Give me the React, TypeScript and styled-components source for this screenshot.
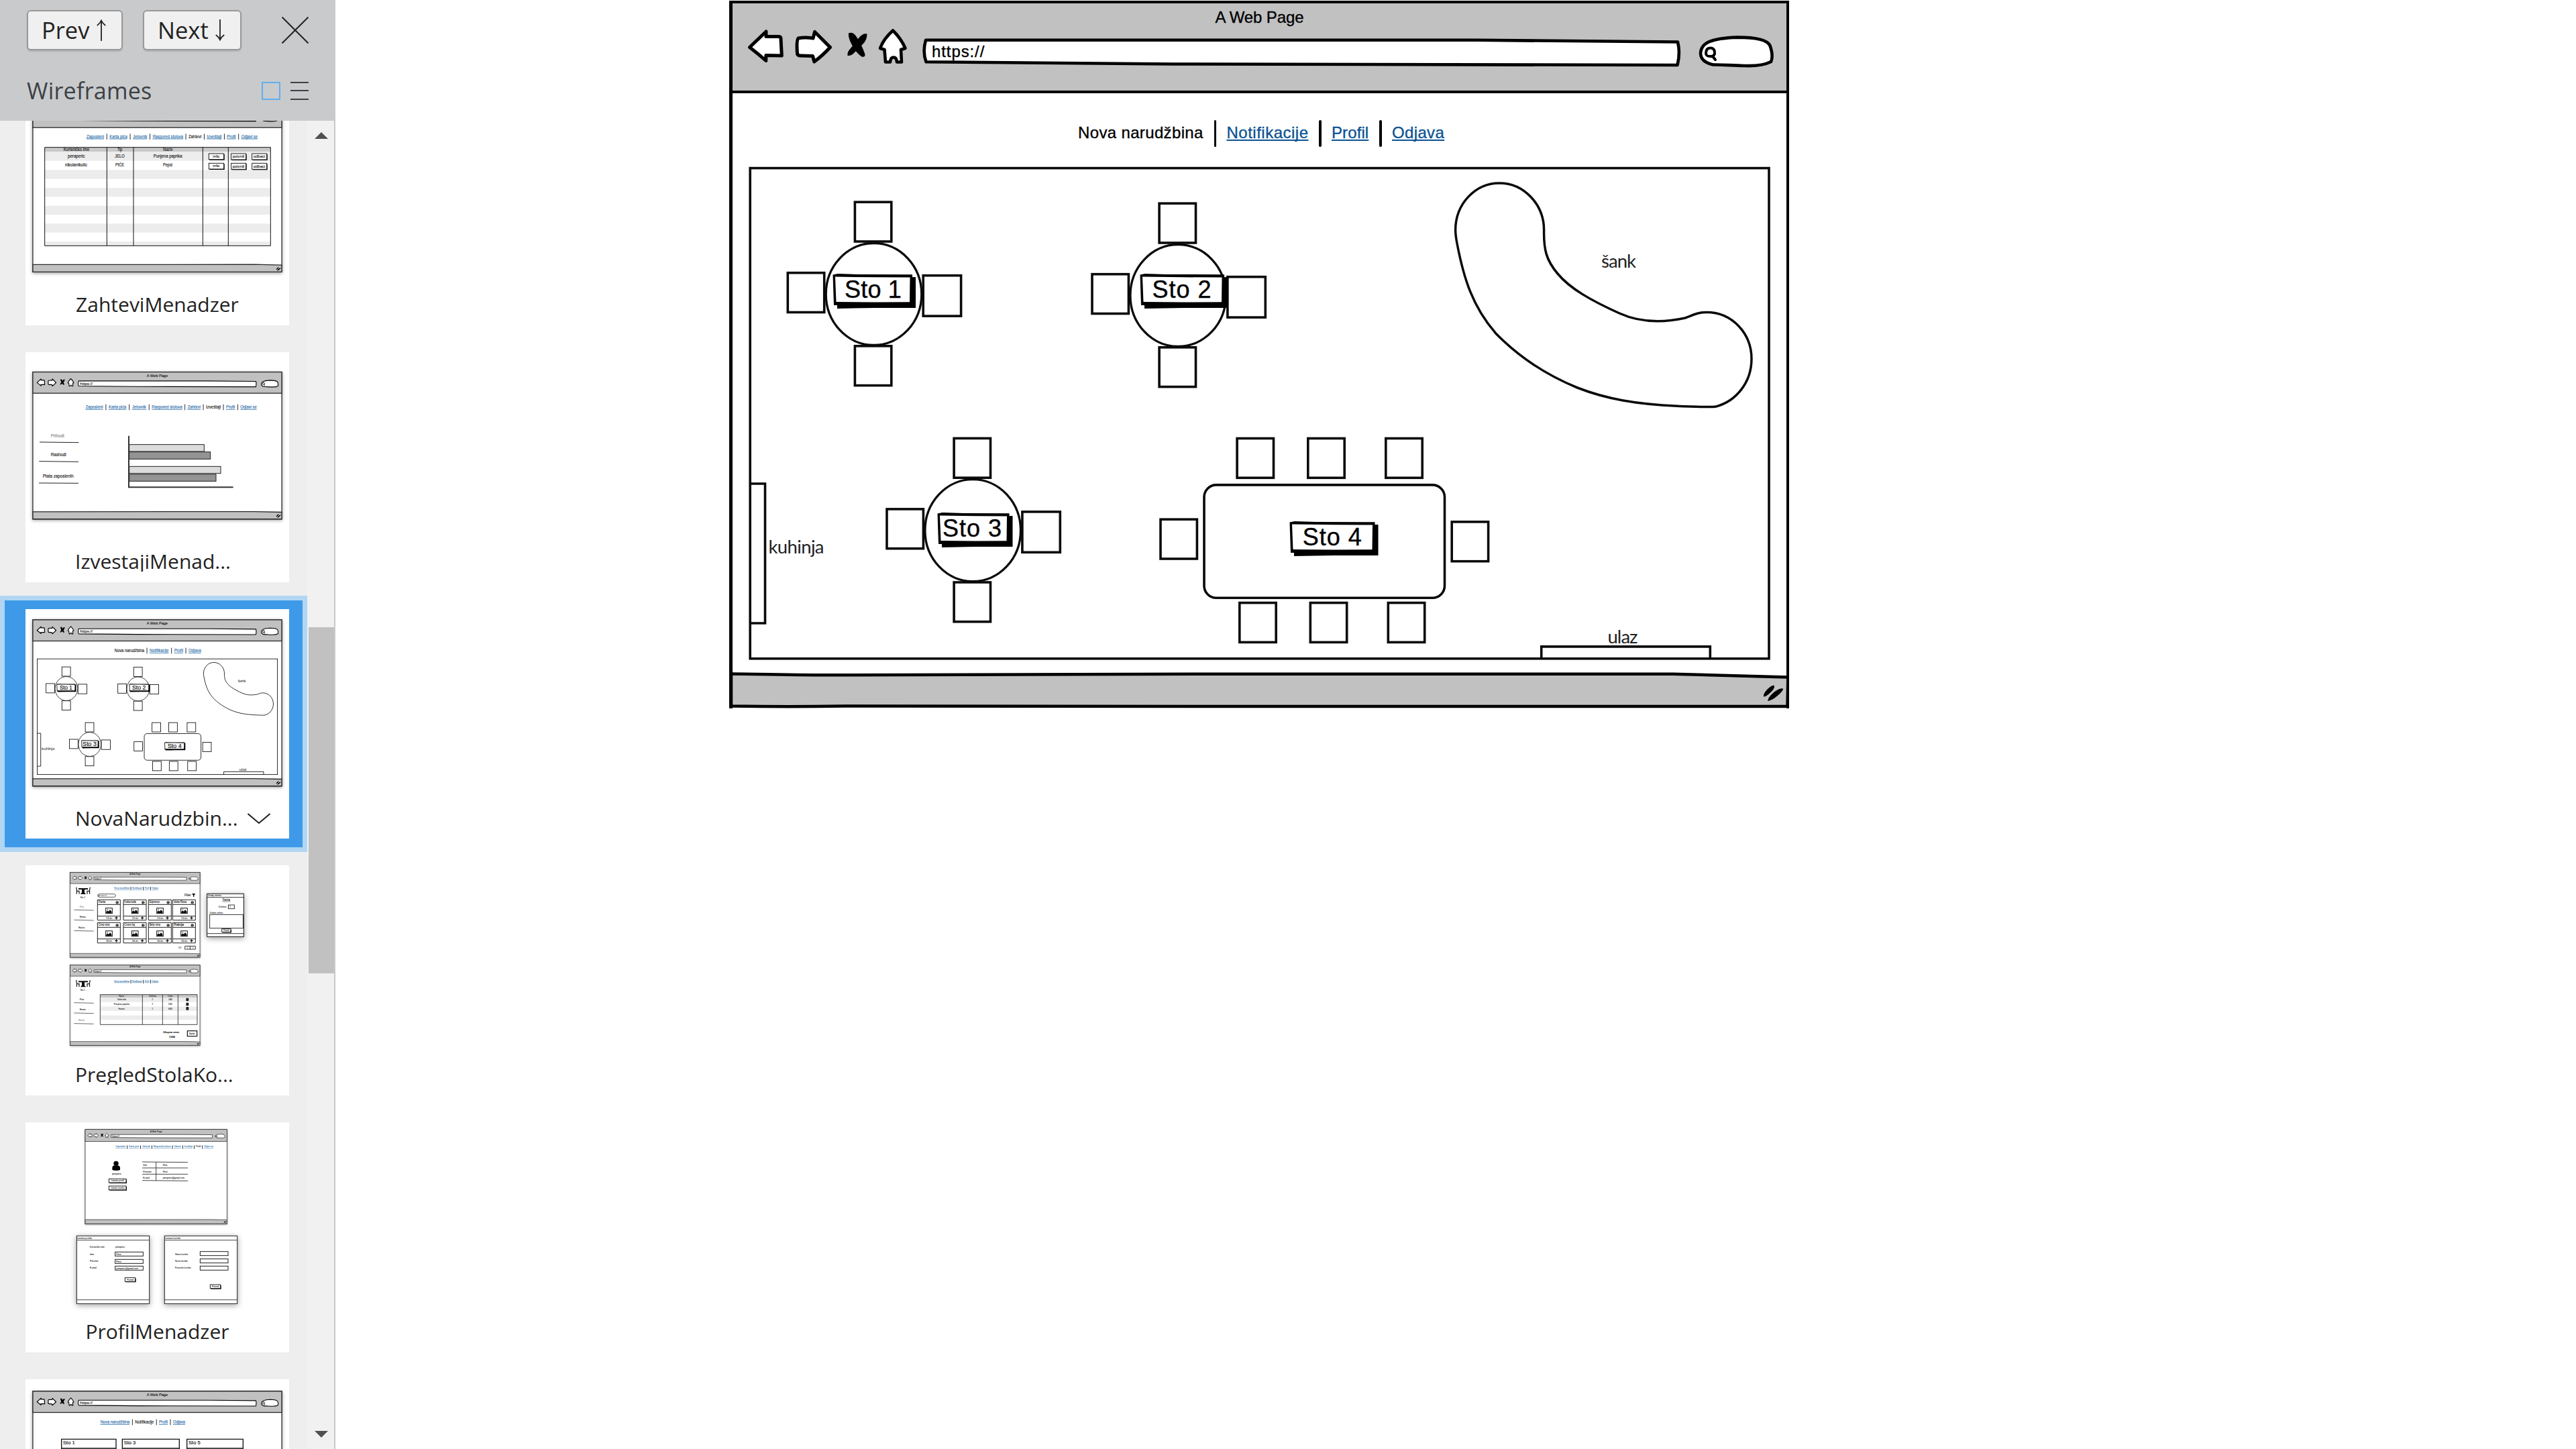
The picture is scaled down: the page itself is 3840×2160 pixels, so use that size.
import React from 'react';
import styled, { createGlobalStyle, css } from 'styled-components';

const uiFont = '"Open Sans", "Noto Sans", sans-serif';
const sketchFont = '"Liberation Sans", Arial, sans-serif';

const Global = createGlobalStyle`
  *, *::before, *::after { box-sizing: border-box; }
  html, body { margin: 0; padding: 0; background: #fff; }
  svg { display: block; }
`;

/* ---------- shared sketch artwork (wireframe canvas units) ---------- */

const INK = '#000';
const CHROME = '#c1c1c1';
const LINK = '#0b5394';

const BackArt = () => (
  <path d="M1117.5 70.5 L1142 47 L1142 54.5 L1161 54.5 Q1164 54.5 1164 58 L1165.3 83 L1141.8 82.5 L1141.8 90.5 Q1130 80 1117.5 70.5Z"
    fill="#fff" stroke={INK} strokeWidth={5} strokeLinejoin="round" />
);
const ForwardArt = () => (
  <path d="M1237.5 70.5 L1214.5 47.5 L1212 57 Q1200 55 1190 57 Q1187 60 1188.5 80 Q1189 83 1194 83 L1211.5 83.5 L1213.8 92 Q1226 83 1237.5 70.5Z"
    fill="#fff" stroke={INK} strokeWidth={5} strokeLinejoin="round" />
);
const StopArt = () => (
  <g fill={INK}>
    <path d="M1265 49.5 Q1271 47 1275.5 53 Q1284 65 1289.5 81 Q1290 85.5 1284.5 84.5 Q1276 79 1270 67 Q1264 56 1265 49.5Z" />
    <path d="M1292.5 50.5 Q1287 49 1281.5 55 L1268 72 Q1263 77 1263.3 82.5 Q1268 84.5 1273 79 L1286 66 Q1292.5 60 1292.5 50.5Z" />
  </g>
);
const HomeArt = () => (
  <path d="M1331 45.5 Q1343 57 1349.5 72 L1343 74 L1344 92.5 L1337 92.5 Q1336.5 85.5 1332 85.5 Q1327.5 85.5 1327 92.5 L1320 92.5 L1318.5 74 L1312 72 Q1317 58 1331 45.5Z"
    fill="#fff" stroke={INK} strokeWidth={4.6} strokeLinejoin="round" />
);
const AddressArt = () => (
  <path d="M1380 59.8 L2200 59.8 L2501 62.5 Q2505 79 2500.5 97 L1750 95.5 L1380.5 92.3 Q1375 77 1380 59.8Z"
    fill="#fff" stroke={INK} strokeWidth={4.6} strokeLinejoin="round" />
);
const SearchArt = () => (
  <g stroke={INK} strokeLinejoin="round" strokeLinecap="round">
    <path d="M2535 79 C2536 64 2550 57 2590 55.6 C2620 55.6 2635 60 2638.5 68 C2642 78 2643 85 2640 92 C2628 98 2612 98.5 2600 98 C2580 97.5 2564 96 2554 96.5 C2542 94 2535 88 2535 79Z"
      fill="#fff" strokeWidth={4.6} />
    <path d="M2549.5 71.5 C2544 71.5 2543 76 2543 79.5 C2543 83.5 2546 84 2550 84 C2555 84 2556.5 81 2556 77.5 C2555.5 73 2553 71.5 2549.5 71.5 M2553 84 L2557 89" fill="none" strokeWidth={4} />
  </g>
);
const GripArt = () => (
  <g fill={INK}>
    <path d="M2629 1038.5 Q2628 1034 2635 1027 Q2643 1020 2645 1022.5 Q2645.5 1027 2639 1032.5 Q2633 1038.5 2629 1038.5Z" />
    <path d="M2635.5 1045 Q2634.5 1041 2642 1034 Q2652 1025 2658 1026.5 Q2658.5 1029.5 2651 1036 Q2642 1044 2635.5 1045Z" />
  </g>
);

const round = [
  { dx: 0, dy: 0 },
  { dx: 453.7, dy: 2 },
  { dx: 147.7, dy: 352.2 },
];
const longTableChairs = [
  [1842.3, 651.7], [1948, 651.7], [2064, 651.7],
  [1728.2, 772.4], [2162.4, 776.1],
  [1846, 896.8], [1951.5, 896.8], [2067.5, 896.8],
];

const Chair = ({ x, y, w = 58, h = 62.4 }: { x: number; y: number; w?: number; h?: number }) => (
  <rect x={x + 1.8} y={y + 1.8} width={w - 3.6} height={h - 3.6} />
);

const PlanArt = () => (
  <>
    <g fill="#fff" stroke="#0a0a0a" strokeWidth={3.6}>
      <rect x={1118.2} y={250.6} width={1518.8} height={731.2} />
      <path d="M1118 721 H1140.5 V929 H1118 M2297.7 981.8 V963.9 H2549.3 V981.8" fill="none" />
      {round.map(({ dx, dy }) => (
        <g key={dx} transform={`translate(${dx} ${dy})`}>
          <Chair x={1272.6} y={299.4} />
          <Chair x={1172.5} y={404.9} />
          <Chair x={1374.4} y={408.9} w={60} h={64} />
          <Chair x={1272.6} y={514} />
          <ellipse cx={1302.5} cy={438.5} rx={71.3} ry={76} strokeWidth={3.3} />
        </g>
      ))}
      <rect x={1795} y={722.9} width={358.5} height={168.3} rx={18} />
      {longTableChairs.map(([x, y]) => <Chair key={`${x}-${y}`} x={x} y={y} />)}
      <path strokeWidth={3.5} d="M2169.6 343 C2169.6 304 2199 272.9 2235 272.9 C2272 272.9 2301.6 305 2301.6 343 C2301 372 2305 388 2322 408 C2340 430 2372 448 2414 467 C2445 481 2480 481 2512 474 C2523 470 2530 465.5 2544 465.5 C2582 465.5 2611 497 2611 535 C2611 570 2588 598 2558 606 C2550 607.5 2520 606 2500 605.3 C2440 602.5 2395 595 2351.5 578 C2300 557 2262 530 2229.5 496.7 C2195 457 2182 415 2172 363 C2170.5 355 2169.6 350 2169.6 343Z" />
    </g>
    <g fill="#222" fontFamily="Lato, 'Open Sans', sans-serif" fontSize={27.5}>
      <text x={2387} y={399.3} textLength={52}>šank</text>
      <text x={1145.5} y={825} textLength={83}>kuhinja</text>
      <text x={2396.5} y={959.3} textLength={45}>ulaz</text>
    </g>
  </>
);

type TableTag = { name: string; x: number; y: number; w: number; tx: number; tw: number };
const tables: TableTag[] = [
  { name: 'Sto 1', x: 1240.5, y: 408, w: 124, tx: 19.5, tw: 80 },
  { name: 'Sto 2', x: 1699, y: 408, w: 131, tx: 19.5, tw: 86.5 },
  { name: 'Sto 3', x: 1397, y: 764, w: 112.5, tx: 9, tw: 87 },
  { name: 'Sto 4', x: 1922.3, y: 777, w: 132.5, tx: 20.5, tw: 88 },
];

const TagArt = ({ w }: { w: number }) => (
  <>
    <path d={`M7 10 L${w} 5 L${w} 51 L${w / 2} 51 L7 52Z`} fill={INK} />
    <path d={`M0.5 1.5 L8 0 L40 1 L${w - 5} 1.2 L${w - 4} 46 L2 47Z`} fill={INK} />
    <path d={`M4 4.6 L${w / 2} 5.3 L${w - 8.5} 5.6 L${w - 9} 42.2 L${w / 2} 42.6 L5.5 42Z`} fill="#fff" />
  </>
);

/* ---------- thumbnail drawings ---------- */

type LabelProps = {
  x: number; y: number; to?: number; size?: number; fill?: string;
  link?: boolean; bold?: boolean; children: string;
};
const Label = ({ x, y, to, size = 20, fill = '#111', link, bold, children }: LabelProps) => {
  const color = link ? '#1f6aa8' : fill;
  return (
    <text x={x} y={y} fontFamily={sketchFont} fontSize={size} fontWeight={bold ? 700 : 400}
      fill={color} stroke={color} strokeWidth={size * 0.02} textDecoration={link ? 'underline' : undefined}
      textLength={to ? to - x : undefined} lengthAdjust="spacingAndGlyphs">{children}</text>
  );
};

const shadow = { filter: 'drop-shadow(0 6px 12px rgba(0,0,0,.38))' };

type MiniBrowserProps = { x: number; y: number; w: number; h: number; untitled?: boolean; children?: React.ReactNode };
const MiniBrowser = ({ x, y, w, h, untitled, children }: MiniBrowserProps) => {
  const s = w / 1579;
  const full = h / s;
  const drop = full - 1054;
  return (
    <g transform={`translate(${x} ${y}) scale(${s}) translate(-1088 -1)`}>
      <rect x={1090.5} y={3.5} width={1574} height={full - 5} fill="#fff" stroke="#2a2a2a" strokeWidth={5.5} style={shadow} />
      <rect x={1090.5} y={3.5} width={1574} height={134} fill={CHROME} stroke="#2a2a2a" strokeWidth={5.5} />
      <g transform={`translate(0 ${drop})`}>
        <path d="M1090.5 1006 L2494 1005 L2664.5 1009 V1052.5 H1090.5Z" fill={CHROME} stroke="#2a2a2a" strokeWidth={5.5} />
        <GripArt />
      </g>
      <BackArt /><ForwardArt /><StopArt /><HomeArt /><AddressArt /><SearchArt />
      {!untitled && (
        <>
          <Label x={1811} y={34} to={1944} size={24}>A Web Page</Label>
          <Label x={1389} y={85} to={1468} size={24}>https://</Label>
        </>
      )}
      {children}
    </g>
  );
};

type NavItem = [string, number, number];
const MiniNav = ({ items, active, y, size = 20, bar = 26 }: { items: NavItem[]; active?: string; y: number; size?: number; bar?: number }) => (
  <>
    {items.map(([name, from, to], i) => (
      <React.Fragment key={name}>
        <Label x={from} to={to} y={y} size={size} link={name !== active}>{name}</Label>
        {i < items.length - 1 && (
          <rect x={(to + items[i + 1][1]) / 2 - 1.2} y={y + 7 - bar} width={2.6} height={bar} fill="#111" />
        )}
      </React.Fragment>
    ))}
  </>
);

const managerNav: NavItem[] = [
  ['Zaposleni', 383, 461], ['Karta pića', 486, 565], ['Jelovnik', 591, 654],
  ['Raspored stolova', 679, 815], ['Zahtevi', 839, 897], ['Izveštaji', 921, 987],
  ['Profil', 1011, 1051], ['Odjavi se', 1075, 1148],
];

const MiniButton = ({ x, y, w, h, from, to, size = 14, children }: { x: number; y: number; w: number; h: number; from: number; to: number; size?: number; children: string }) => (
  <>
    <path d={`M${x + 3} ${y + 3} h${w} v${h} h${-w}z`} fill="#000" />
    <rect x={x} y={y} width={w} height={h} fill="#fff" stroke="#111" strokeWidth={2.8} />
    <Label x={from} to={to} y={y + h * 0.7} size={size}>{children}</Label>
  </>
);

const RequestsDrawing = () => (
  <>
    <MiniBrowser x={145} y={474} w={1117} h={744} untitled />
    <g transform="translate(4 0)"><MiniNav items={managerNav} active="Zahtevi" y={617} /></g>
    <rect x={200} y={659} width={1010} height={20} fill="#c9c9c9" />
    {[679, 760, 840, 920, 1000, 1080].map((y) => (
      <rect key={y} x={200} y={y} width={1010} height={y === 1080 ? 19 : 40} fill="#ececec" />
    ))}
    <path d="M200 659 H1210 V1099 H200Z M478 659 V1099 M597 659 V1099 M907 659 V1099 M1021 659 V1099" fill="none" stroke="#111" strokeWidth={3} />
    <Label x={284} to={400} y={674}>Korisničko ime</Label>
    <Label x={525} to={547} y={674}>Tip</Label>
    <Label x={729} to={772} y={674}>Naziv</Label>
    <Label x={303} to={380} y={705}>peraperic</Label>
    <Label x={514} to={557} y={705}>JELO</Label>
    <Label x={686} to={815} y={705}>Punjena paprika</Label>
    <Label x={291} to={390} y={745}>nikolanikolic</Label>
    <Label x={516} to={555} y={745}>PIĆE</Label>
    <Label x={729} to={771} y={745}>Pepsi</Label>
    {[687, 730].map((y) => (
      <React.Fragment key={y}>
        <MiniButton x={934} y={y} w={67} h={26} from={952} to={982} size={18}>info</MiniButton>
        <MiniButton x={1034} y={y} w={66} h={27} from={1040} to={1093} size={18}>potvrdi</MiniButton>
        <MiniButton x={1127} y={y} w={66} h={27} from={1133} to={1186} size={18}>odbaci</MiniButton>
      </React.Fragment>
    ))}
  </>
);

const ReportsDrawing = () => (
  <>
    <MiniBrowser x={145} y={162} w={1117} h={661} />
    <MiniNav items={managerNav} active="Izveštaji" y={327} />
    <Label x={227} to={287} y={455} fill="#888">Prihodi</Label>
    <Label x={227} to={296} y={540}>Rashodi</Label>
    <Label x={191} to={329} y={637}>Plata zaposlenih</Label>
    <g stroke="#222" strokeWidth={3} fill="none">
      <path d="M177 477 L352 479 M175 563 L351 565 M174 660 L351 661" />
      <rect x={578} y={488} width={335} height={31} fill="#dcdcdc" />
      <rect x={578} y={521} width={363} height={32} fill="#949494" />
      <rect x={578} y={586} width={409} height={31} fill="#dcdcdc" />
      <rect x={578} y={621} width={388} height={31} fill="#949494" />
      <path d="M576 449 V679 H1043" strokeWidth={6} stroke="#333" />
    </g>
  </>
);

const OrderDrawing = () => (
  <>
    <MiniBrowser x={145} y={130} w={1117} h={747}>
      <PlanArt />
      {tables.map((t) => (
        <g key={t.name} transform={`translate(${t.x} ${t.y})`}>
          <TagArt w={t.w} />
          <Label x={t.tx} to={t.tx + t.tw} y={35.5} size={36}>{t.name}</Label>
        </g>
      ))}
    </MiniBrowser>
    <MiniNav
      items={[['Nova narudžbina', 512, 645], ['Notifikacije', 669, 755], ['Profil', 779, 819], ['Odjava', 843, 899]]}
      active="Nova narudžbina" y={276} />
  </>
);

const TableIcon = ({ x, y }: { x: number; y: number }) => (
  <g transform={`translate(${x} ${y})`}>
    <path d="M12 4 H54 V10 H39 V22 Q39 27 46 31 H20 Q27 27 27 22 V10 H12Z" fill="#111" />
    <path d="M2 0 Q6 12 4 30 M4 17 H15 V30 M64 0 Q60 12 62 30 M62 17 H51 V30" fill="none" stroke="#111" strokeWidth={3.5} />
  </g>
);

const waiterNav: NavItem[] = [['Nova narudžbina', 511, 579], ['Notifikacije', 591, 635], ['Profil', 647, 667], ['Odjava', 679, 708]];
const drinks: [string, number, number, number][] = [
  ['Fanta', 436, 187, 35], ['Koka kola', 552, 187, 58], ['Espresso', 664, 187, 50], ['Voda Rosa', 772, 187, 64],
  ['Crno vino', 436, 289, 56], ['Crveni čaj', 552, 289, 52], ['Belo vino', 664, 289, 54], ['Rakija', 772, 289, 52],
];

const SideMenu = ({ y, rows, muted }: { y: number; rows: [string, number, number, number][]; muted: string }) => (
  <>
    {rows.map(([name, from, to, dy]) => (
      <React.Fragment key={name}>
        <Label x={from} to={to} y={y + dy} size={12} fill={name === muted ? '#888' : '#111'}>{name}</Label>
        <path d={`M331 ${y + dy + 11} L419 ${y + dy + 13}`} stroke="#333" strokeWidth={2.2} />
      </React.Fragment>
    ))}
  </>
);

const TableViewDrawing = () => (
  <>
    <MiniBrowser x={313} y={64} w={582} h={381} />
    <MiniNav items={waiterNav} y={138} size={12} bar={16} />
    <TableIcon x={339} y={131} />
    <Label x={359} to={381} y={180} size={11}>Sto 1</Label>
    <SideMenu y={0} muted="Pića" rows={[['Pića', 356, 375, 221], ['Hrana', 356, 383, 266], ['Račun', 351, 379, 314]]} />
    <rect x={437} y={161} width={80} height={14} rx={7} fill="#fff" stroke="#222" strokeWidth={2.2} />
    <Label x={449} to={478} y={172} size={10} fill="#777">search</Label>
    <circle cx={443} cy={168} r={3} fill="none" stroke="#222" strokeWidth={2} />
    <Label x={825} to={854} y={172} size={16}>Filter</Label>
    <path d="M858 159 H874 L868 167 V174 H864 V167Z" fill="#111" />
    {drinks.map(([name, x, y, w], i) => (
      <g key={name}>
        <path d={`M${x} ${y} h102 v91 h-102z m0 21 h102 m-102 52 h102`} fill="#fff" stroke="#111" strokeWidth={2.8} />
        <Label x={x + 4} to={x + 4 + w * 0.9} y={y + 14} size={15}>{name}</Label>
        <circle cx={x + 88} cy={y + 12} r={6.5} fill="#222" />
        <rect x={x + 87} y={y + 8} width={2} height={8} fill="#ddd" />
        <rect x={x + 37} y={y + 37} width={29} height={24} fill="#fff" stroke="#111" strokeWidth={3} />
        <path d={`M${x + 39} ${y + 59} v-6 l6 -5 l5 4 l6 -8 l7 8 v7z`} fill="#111" />
        <circle cx={x + 45} cy={y + 43} r={2} fill="#111" />
        <Label x={x + 38} to={x + 66} y={y + 86} size={10}>{i < 4 ? '120 din' : '160 din'}</Label>
        <path d={`M${x + 78} ${y + 81} h13 m-6.5 -6.5 v13`} stroke="#111" strokeWidth={4} />
      </g>
    ))}
    <Label x={798} to={810} y={404} size={10}>1/3</Label>
    <path d="M827 394 H874 V408 H827Z M850 394 V408" fill="#fff" stroke="#111" strokeWidth={2.5} />
    <path d="M841 398 l-4 3 l4 3 M861 398 l4 3 l-4 3" fill="none" stroke="#333" strokeWidth={1.5} />

    <rect x={926} y={160} width={164} height={192} fill="#fff" stroke="#111" strokeWidth={3} style={shadow} />
    <path d="M926 176 H1090 M926 338 H1090" stroke="#111" strokeWidth={2.5} />
    <Label x={929} to={990} y={172} size={10}>Dodaj stavku</Label>
    <Label x={995} to={1029} y={193} size={15}>Fanta</Label>
    <path d="M994 195 H1030" stroke="#222" strokeWidth={1.5} />
    <Label x={978} to={1012} y={221} size={10}>Količina</Label>
    <rect x={1021} y={210} width={27} height={17} fill="#fff" stroke="#111" strokeWidth={2.5} />
    <Label x={1026} y={222} size={10}>1</Label>
    <Label x={938} to={997} y={249} size={9}>Dodatni zahtevi</Label>
    <rect x={938} y={253} width={149} height={61} fill="#fff" stroke="#111" strokeWidth={2.5} />
    <MiniButton x={992} y={317} w={40} h={14} from={1000} to={1024} size={10}>Potvrdi</MiniButton>

    <MiniBrowser x={313} y={478} w={582} h={361} />
    <MiniNav items={waiterNav} y={554} size={12} bar={16} />
    <TableIcon x={339} y={546} />
    <Label x={359} to={381} y={594} size={11}>Sto 1</Label>
    <SideMenu y={414} muted="Račun" rows={[['Pića', 356, 375, 222], ['Hrana', 356, 383, 268], ['Račun', 351, 379, 315]]} />
    <rect x={448} y={611} width={434} height={13} fill="#c9c9c9" />
    <rect x={448} y={624} width={434} height={20} fill="#ececec" />
    <rect x={448} y={664} width={434} height={20} fill="#ececec" />
    <rect x={448} y={704} width={434} height={20} fill="#ececec" />
    <path d="M448 611 H882 V745 H448Z M637 611 V745 M727 611 V745 M796 611 V745" fill="none" stroke="#222" strokeWidth={2.5} />
    <Label x={532} to={555} y={621} size={10}>Naziv</Label>
    <Label x={667} to={698} y={621} size={10}>Količina</Label>
    <Label x={750} to={772} y={621} size={10}>Cena</Label>
    <Label x={525} to={564} y={637} size={10}>Koka kola</Label>
    <Label x={509} to={579} y={657} size={10}>Punjena paprika</Label>
    <Label x={530} to={558} y={677} size={10}>Espreso</Label>
    {['2', '1', '1'].map((n, i) => <Label key={i} x={679} y={637 + i * 20} size={10}>{n}</Label>)}
    {['240', '550', '600'].map((n, i) => <Label key={n} x={753} to={770} y={637 + i * 20} size={10}>{n}</Label>)}
    {[633, 654, 673].map((y) => <rect key={y} x={832} y={y - 7} width={12} height={14} rx={3} fill="#222" />)}
    <Label x={730} to={803} y={783} size={13} bold>Ukupna cena:</Label>
    <Label x={756} to={783} y={803} size={12} bold>1390</Label>
    <rect x={838} y={773} width={43} height={24} fill="#fff" stroke="#111" strokeWidth={3.5} />
    <Label x={846} to={872} y={788} size={10}>Naplati</Label>
  </>
);

const profileNav: NavItem[] = [
  ['Zaposleni', 517, 562], ['Karta pića', 576, 621], ['Jelovnik', 636, 672], ['Raspored stolova', 686, 764],
  ['Zahtevi', 778, 810], ['Izveštaji', 824, 861], ['Profil', 876, 898], ['Odjavi se', 912, 954],
];

const Dialog = ({ x, title, to }: { x: number; title: string; to: number }) => (
  <>
    <rect x={x} y={607} width={325} height={303} fill="#fff" stroke="#222" strokeWidth={3} style={shadow} />
    <path d={`M${x} 626 h325 M${x} 893 h325`} stroke="#222" strokeWidth={2.5} />
    <Label x={x + 3} to={to} y={620} size={11}>{title}</Label>
  </>
);
const Field = ({ x, y, to, children }: { x: number; y: number; to?: number; children?: string }) => (
  <>
    <rect x={x} y={y} width={125} height={18} fill="#fff" stroke="#111" strokeWidth={2.8} />
    {children && <Label x={x + 5} to={to} y={y + 13} size={11}>{children}</Label>}
  </>
);

const ProfileDrawing = () => (
  <>
    <MiniBrowser x={380} y={130} w={636} h={424} />
    <MiniNav items={profileNav} active="Profil" y={211} size={12} bar={16} />
    <ellipse cx={519} cy={283} rx={11} ry={11} fill="#000" />
    <path d="M502 312 V303 Q503 292 512 292 Q519 296 526 292 Q536 292 537 303 V312 Q519 318 502 312Z" fill="#000" />
    <Label x={501} to={543} y={334} size={11}>peraperic</Label>
    <MiniButton x={487} y={352} w={77} h={17} from={498} to={555} size={11}>Izmeni profil</MiniButton>
    <MiniButton x={487} y={384} w={77} h={17} from={496} to={557} size={11}>Izmeni lozinku</MiniButton>
    <path d="M636 276 L840 278 M636 303 H840 M636 331 H840 M636 359 L840 361 M698 277 V360" stroke="#222" strokeWidth={2.5} />
    <Label x={640} to={657} y={295} size={12}>Ime</Label>
    <Label x={640} to={677} y={323} size={12}>Prezime</Label>
    <Label x={640} to={669} y={351} size={12}>E-mail</Label>
    <Label x={728} to={748} y={295} size={12}>Pera</Label>
    <Label x={728} to={750} y={323} size={12}>Perić</Label>
    <Label x={728} to={825} y={351} size={12}>peraperic@gmail.com</Label>

    <Dialog x={343} to={411} title="Izmena profila" />
    <Label x={402} to={467} y={660} size={11}>Korisničko ime</Label>
    <Label x={516} to={559} y={660} size={11}>peraperic</Label>
    <Label x={402} to={420} y={692} size={11}>Ime</Label>
    <Label x={402} to={439} y={723} size={11}>Prezime</Label>
    <Label x={402} to={431} y={754} size={11}>E-mail</Label>
    <Field x={515} y={679} to={541}>Pera</Field>
    <Field x={515} y={712} to={543}>Perić</Field>
    <Field x={515} y={742} to={617}>peraperic@gmail.com</Field>
    <MiniButton x={559} y={794} w={46} h={17} from={568} to={598} size={11}>Potvrdi</MiniButton>

    <Dialog x={736} to={807} title="Izmena lozinke" />
    <Label x={783} to={840} y={692} size={11}>Stara lozinka</Label>
    <Label x={783} to={839} y={723} size={11}>Nova lozinka</Label>
    <Label x={783} to={854} y={754} size={11}>Ponovite lozinku</Label>
    <Field x={895} y={677} />
    <Field x={895} y={710} />
    <Field x={895} y={742} />
    <MiniButton x={940} y={825} w={46} h={17} from={948} to={979} size={11}>Potvrdi</MiniButton>
  </>
);

const NotificationsDrawing = () => (
  <>
    <MiniBrowser x={145} y={1300} w={1117} h={744} />
    <MiniNav
      items={[['Nova narudžbina', 449, 580], ['Notifikacije', 604, 688], ['Profil', 711, 750], ['Odjava', 774, 828]]}
      active="Notifikacije" y={1446} />
    {([['Sto 1', 275, 519], ['Sto 3', 547, 802], ['Sto 5', 836, 1087]] as NavItem[]).map(([name, from, to]) => (
      <React.Fragment key={name}>
        <path d={`M${from} 1516 H${to} V1640 H${from}Z M${from} 1557 H${to}`} fill="#fff" stroke="#111" strokeWidth={4} />
        <Label x={from + 7} to={from + 60} y={1540} size={23}>{name}</Label>
      </React.Fragment>
    ))}
  </>
);

/* ---------- sidebar ---------- */

const Screen = styled.div`
  display: flex;
  width: 3840px;
  height: 2160px;
  overflow: hidden;
  background: #fff;
`;

const Sidebar = styled.aside`
  display: flex;
  flex-direction: column;
  flex: none;
  width: 500px;
  height: 2160px;
  background: #eee;
  font-family: ${uiFont};
  color: #222;
`;

const SidebarHeader = styled.header`
  flex: none;
  height: 180px;
  padding: 15px 40px 0;
  background: #c9cacc;
`;

const ButtonRow = styled.div`
  display: flex;
  align-items: center;
  height: 60px;
`;

const StepButton = styled.button<{ $width: number; $gap: number }>`
  display: flex;
  align-items: center;
  gap: ${(p) => p.$gap}px;
  width: ${(p) => p.$width}px;
  height: 60px;
  margin-right: 30px;
  padding: 0 0 0 20px;
  border: 2px solid #999;
  border-radius: 6px;
  background: #f0f0f0;
  box-shadow: 0 2px 2px rgba(0, 0, 0, 0.12);
  font: 400 34.5px/56px ${uiFont};
  color: #222;
`;

const CloseButton = styled.div`
  margin-left: auto;
`;

const TitleRow = styled.div`
  display: flex;
  align-items: center;
  height: 50px;
  margin-top: 35px;
`;

const Title = styled.h1`
  flex: 1;
  margin: 0;
  font: 400 34px/50px ${uiFont};
  letter-spacing: 0.25px;
  color: #3b4146;
`;

const GridToggle = styled.span`
  width: 28px;
  height: 27px;
  margin-right: 15px;
  border: 2px solid #62aeef;
`;

const ListToggle = styled.span`
  display: flex;
  flex-direction: column;
  justify-content: space-between;
  width: 27px;
  height: 27px;

  i { height: 2px; background: #3a4147; }
`;

const SidebarBody = styled.div`
  display: flex;
  flex: 1;
  min-height: 0;
  border-right: 2px solid #c9c9cb;
`;

const List = styled.div`
  flex: none;
  width: 458px;
  overflow: hidden;
`;

const ListTrack = styled.div`
  margin-top: -58px;
`;

const Item = styled.div<{ $selected?: boolean }>`
  height: 382.75px;
  padding: 13px 20px 13px 31px;
  border: 7px solid transparent;
  ${(p) => p.$selected && css`
    border-color: #b0d6f4;
    background: #3e9ae8;
  `}
`;

const Card = styled.div`
  display: flex;
  flex-direction: column;
  width: 393px;
  height: 342.75px;
  background: #fff;
`;

const Preview = styled.svg`
  flex: none;
  width: 393px;
  height: 300px;
  margin-bottom: -11px;
`;

const Caption = styled.div<{ $cut: boolean }>`
  display: flex;
  align-items: center;
  justify-content: ${(p) => (p.$cut ? 'flex-start' : 'center')};
  height: 38px;
  padding-left: ${(p) => (p.$cut ? '74px' : '0')};
`;

const CaptionText = styled.span<{ $cut: boolean }>`
  height: 38px;
  white-space: nowrap;
  font: 400 30px/46px ${uiFont};
  color: #222;
  ${(p) => p.$cut && css`
    width: 243px;
    overflow: hidden;
  `}
`;

const Chevron = styled.svg`
  margin: 10px 0 0 14px;
`;

const Scrollbar = styled.div`
  display: flex;
  flex-direction: column;
  align-items: flex-end;
  width: 40px;
  background: #f1f1f1;
`;

const ScrollArrow = styled.div<{ $down?: boolean }>`
  width: 20px;
  height: 10px;
  margin: ${(p) => (p.$down ? 'auto 9px 17px 0' : '17px 9px 0 0')};
  background: #505050;
  clip-path: ${(p) => (p.$down ? 'polygon(0 0, 100% 0, 50% 100%)' : 'polygon(50% 0, 100% 100%, 0 100%)')};
`;

const ScrollThumb = styled.div`
  width: 38px;
  height: 516px;
  margin-top: 728px;
  background: #c1c1c1;
`;

type Thumb = { name: string; top: number; cut?: boolean; selected?: boolean; Drawing: React.FC };
const thumbs: Thumb[] = [
  { name: 'ZahteviMenadzer', top: 426, Drawing: RequestsDrawing },
  { name: 'IzvestajiMenad...', top: 75, cut: true, Drawing: ReportsDrawing },
  { name: 'NovaNarudzbin...', top: 84, cut: true, selected: true, Drawing: OrderDrawing },
  { name: 'PregledStolaKo...', top: 33, cut: true, Drawing: TableViewDrawing },
  { name: 'ProfilMenadzer', top: 99, Drawing: ProfileDrawing },
  { name: '', top: 1248, Drawing: NotificationsDrawing },
];

/* ---------- main wireframe ---------- */

const Canvas = styled.main`
  flex: 1;
  padding: 1px 0 0 587px;
`;

const Browser = styled.div`
  display: flex;
  flex-direction: column;
  width: 1580px;
  height: 1055px;
  border: solid #000;
  border-width: 4px 4px 0 5px;
  background: #fff;
  font-family: ${sketchFont};
  color: #000;
  -webkit-text-stroke: 0.35px currentColor;
`;

const Chrome = styled.div`
  flex: none;
  height: 134px;
  border-bottom: 4px solid #000;
  background: ${CHROME};
`;

const WindowTitle = styled.div`
  height: 36px;
  padding-top: 7px;
  text-align: center;
  font-size: 24px;
  line-height: 28px;
  letter-spacing: -0.1px;
`;

const Toolbar = styled.div`
  display: flex;
  height: 64px;
  padding-left: 21px;
`;

const ToolIcon = styled.svg<{ $after: number }>`
  flex: none;
  margin-right: ${(p) => p.$after}px;
`;

const AddressBar = styled.div`
  position: relative;
  flex: none;
  width: 1132px;
  margin-right: 25px;
`;

const AddressOutline = styled.svg`
  position: absolute;
  inset: 0;
`;

const Url = styled.span`
  position: relative;
  display: block;
  padding: 22px 0 0 14px;
  font-size: 24px;
  line-height: 28px;
  letter-spacing: 0.9px;
`;

const NavBar = styled.nav`
  display: flex;
  align-items: center;
  height: 40px;
  margin-top: 40px;
  padding-left: 515px;
  font-size: 24px;
  line-height: 28px;
`;

const NavEntry = styled.span<{ $width: number; $spacing: number; $link?: boolean }>`
  width: ${(p) => p.$width}px;
  margin-bottom: 2px;
  white-space: nowrap;
  letter-spacing: ${(p) => p.$spacing}px;
  color: ${(p) => (p.$link ? LINK : '#000')};
  text-decoration: ${(p) => (p.$link ? 'underline' : 'none')};
  text-decoration-thickness: 1.5px;
  text-underline-offset: 2px;
  text-decoration-skip-ink: none;
`;

const NavDivider = styled.i`
  width: 3.5px;
  height: 40px;
  margin: 0 15.5px;
  border-radius: 2px;
  background: #000;
`;

const Plan = styled.div`
  position: relative;
  flex: none;
  width: 1523px;
  height: 736px;
  margin: 29px 0 0 24px;
  -webkit-text-stroke: 0;
`;

const TableButton = styled.button<{ $x: number; $y: number; $w: number; $pad: number; $spacing: number }>`
  position: absolute;
  left: ${(p) => p.$x}px;
  top: ${(p) => p.$y}px;
  width: ${(p) => p.$w}px;
  height: 52px;
  padding: 0 0 0 ${(p) => p.$pad}px;
  border: 0;
  background: none;
  text-align: left;
  white-space: nowrap;
  font: 400 36px/42px ${sketchFont};
  letter-spacing: ${(p) => p.$spacing}px;
  color: #000;
  -webkit-text-stroke: 0.4px #000;

  svg { position: absolute; left: 0; top: 0; }
  span { position: relative; display: block; margin-top: -5px; }
`;

const StatusBar = styled.svg`
  flex: none;
  width: 1580px;
  height: 56px;
  margin: 17px 0 0 -5px;
`;

export default function App() {
  return (
    <>
      <Global />
      <Screen>
        <Sidebar>
          <SidebarHeader>
            <ButtonRow>
              <StepButton $width={143} $gap={11}>
                Prev
                <svg width="14" height="32" viewBox="0 0 14 32" fill="none" stroke="#222" strokeWidth="1.8"><path d="M7 32 V2 M0.8 9 Q5 6 7 1.5 Q9 6 13.2 9" /></svg>
              </StepButton>
              <StepButton $width={147} $gap={10}>
                Next
                <svg width="14" height="32" viewBox="0 0 14 32" fill="none" stroke="#222" strokeWidth="1.8"><path d="M7 0 V30 M0.8 23 Q5 26 7 30.5 Q9 26 13.2 23" /></svg>
              </StepButton>
              <CloseButton>
                <svg width="40" height="40" viewBox="0 0 40 40" stroke="#222" strokeWidth="2"><path d="M0.5 0.5 L39.5 39.5 M39.5 0.5 L0.5 39.5" /></svg>
              </CloseButton>
            </ButtonRow>
            <TitleRow>
              <Title>Wireframes</Title>
              <GridToggle />
              <ListToggle><i /><i /><i /></ListToggle>
            </TitleRow>
          </SidebarHeader>
          <SidebarBody>
            <List>
              <ListTrack>
                {thumbs.map(({ name, top, cut, selected, Drawing }) => (
                  <Item key={top} $selected={selected}>
                    <Card>
                      <Preview viewBox={`114 ${top} 1179 900`}><Drawing /></Preview>
                      <Caption $cut={!!cut}>
                        <CaptionText $cut={!!cut}>{name}</CaptionText>
                        {selected && (
                          <Chevron width="34" height="17" viewBox="0 0 34 17" fill="none" stroke="#222" strokeWidth="2"><path d="M0.5 1 L17 15 L33.5 1" /></Chevron>
                        )}
                      </Caption>
                    </Card>
                  </Item>
                ))}
              </ListTrack>
            </List>
            <Scrollbar>
              <ScrollArrow />
              <ScrollThumb />
              <ScrollArrow $down />
            </Scrollbar>
          </SidebarBody>
        </Sidebar>

        <Canvas>
          <Browser>
            <Chrome>
              <WindowTitle>A Web Page</WindowTitle>
              <Toolbar>
                <ToolIcon $after={16} width="56" height="64" viewBox="1113 41 56 64"><BackArt /></ToolIcon>
                <ToolIcon $after={17} width="57" height="64" viewBox="1185 41 57 64"><ForwardArt /></ToolIcon>
                <ToolIcon $after={14} width="35" height="64" viewBox="1259 41 35 64"><StopArt /></ToolIcon>
                <ToolIcon $after={21} width="46" height="64" viewBox="1308 41 46 64"><HomeArt /></ToolIcon>
                <AddressBar>
                  <AddressOutline width="1132" height="64" viewBox="1375 41 1132 64"><AddressArt /></AddressOutline>
                  <Url>https://</Url>
                </AddressBar>
                <ToolIcon $after={0} width="114" height="64" viewBox="2532 41 114 64"><SearchArt /></ToolIcon>
              </Toolbar>
            </Chrome>
            <NavBar>
              <NavEntry $width={187} $spacing={0.35}>Nova narudžbina</NavEntry>
              <NavDivider />
              <NavEntry $width={122} $spacing={0.5} $link>Notifikacije</NavEntry>
              <NavDivider />
              <NavEntry $width={55.5} $spacing={0.1} $link>Profil</NavEntry>
              <NavDivider />
              <NavEntry $width={77.5} $spacing={0.35} $link>Odjava</NavEntry>
            </NavBar>
            <Plan>
              <svg width="1523" height="736" viewBox="1116 248 1523 736"><PlanArt /></svg>
              {tables.map((t) => (
                <TableButton key={t.name} $x={t.x - 1116} $y={t.y - 248} $w={t.w} $pad={t.tx - 1} $spacing={t.name === 'Sto 1' ? 0.2 : 1}>
                  <svg width={t.w} height="52"><TagArt w={t.w} /></svg>
                  <span>{t.name}</span>
                </TableButton>
              ))}
            </Plan>
            <StatusBar viewBox="1087 1001 1580 56">
              <path d="M1091 1005 L1300 1006 L2494 1004.5 L2664 1009 V1053 H1091Z" fill={CHROME} />
              <path d="M1087 1004.5 C1130 1004.5 1180 1006.5 1260 1006.3 C1330 1006.3 1400 1005.5 1800 1004.8 H2494 L2665 1009.5" fill="none" stroke="#000" strokeWidth="4.5" />
              <path d="M1090 1000 V1052.5 C1150 1053.5 1200 1053.5 1260 1052.5 C1330 1051 1400 1051.5 1800 1053 L2664.5 1053 L2665.5 1000" fill="none" stroke="#000" strokeWidth="4.5" strokeLinejoin="round" />
              <GripArt />
            </StatusBar>
          </Browser>
        </Canvas>
      </Screen>
    </>
  );
}
